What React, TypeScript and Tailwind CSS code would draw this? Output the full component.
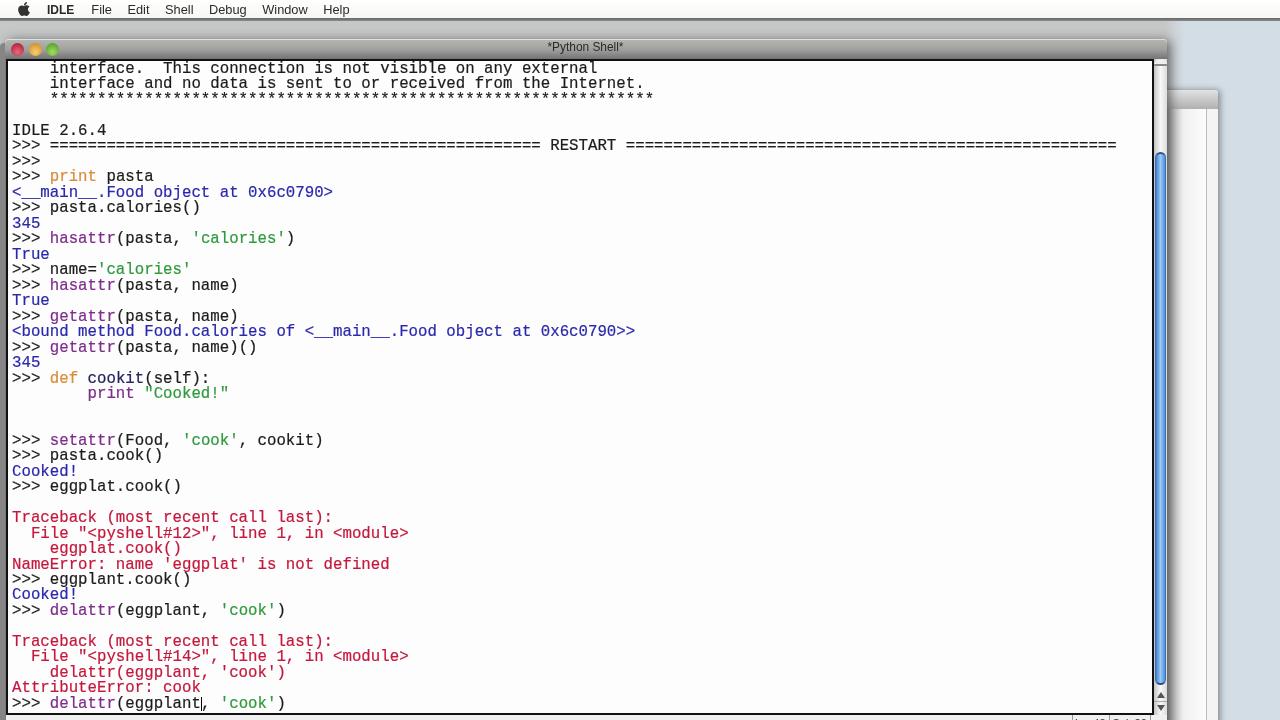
import { FaApple } from 'react-icons/fa'

type Seg = [string, string]

const K = 'text-[#d98c3a]' // keyword
const S = 'text-[#2f9a3c]' // string
const B = 'text-[#7f2c8c]' // builtin
const D = 'text-[#23235e]' // definition
const O = 'text-[#2a28ad]' // stdout
const E = 'text-[#c4183c]' // stderr
const T = 'text-[#1c1c1c]' // plain

const bar = '='.repeat(52)

const lines: Seg[][] = [
  [[T, '    interface.  This connection is not visible on any external']],
  [[T, '    interface and no data is sent to or received from the Internet.']],
  [[T, '    ' + '*'.repeat(64)]],
  [],
  [[T, 'IDLE 2.6.4']],
  [[T, '>>> ' + bar + ' RESTART ' + bar]],
  [[T, '>>> ']],
  [[T, '>>> '], [K, 'print'], [T, ' pasta']],
  [[O, '<__main__.Food object at 0x6c0790>']],
  [[T, '>>> pasta.calories()']],
  [[O, '345']],
  [[T, '>>> '], [B, 'hasattr'], [T, '(pasta, '], [S, "'calories'"], [T, ')']],
  [[O, 'True']],
  [[T, '>>> name='], [S, "'calories'"]],
  [[T, '>>> '], [B, 'hasattr'], [T, '(pasta, name)']],
  [[O, 'True']],
  [[T, '>>> '], [B, 'getattr'], [T, '(pasta, name)']],
  [[O, '<bound method Food.calories of <__main__.Food object at 0x6c0790>>']],
  [[T, '>>> '], [B, 'getattr'], [T, '(pasta, name)()']],
  [[O, '345']],
  [[T, '>>> '], [K, 'def'], [T, ' '], [D, 'cookit'], [T, '(self):']],
  [[T, '        '], [B, 'print'], [T, ' '], [S, '"Cooked!"']],
  [],
  [],
  [[T, '>>> '], [B, 'setattr'], [T, '(Food, '], [S, "'cook'"], [T, ', cookit)']],
  [[T, '>>> pasta.cook()']],
  [[O, 'Cooked!']],
  [[T, '>>> eggplat.cook()']],
  [],
  [[E, 'Traceback (most recent call last):']],
  [[E, '  File "<pyshell#12>", line 1, in <module>']],
  [[E, '    eggplat.cook()']],
  [[E, "NameError: name 'eggplat' is not defined"]],
  [[T, '>>> eggplant.cook()']],
  [[O, 'Cooked!']],
  [[T, '>>> '], [B, 'delattr'], [T, '(eggplant, '], [S, "'cook'"], [T, ')']],
  [],
  [[E, 'Traceback (most recent call last):']],
  [[E, '  File "<pyshell#14>", line 1, in <module>']],
  [[E, "    delattr(eggplant, 'cook')"]],
  [[E, 'AttributeError: cook']],
]

const menus = ['File', 'Edit', 'Shell', 'Debug', 'Window', 'Help']

function MenuBar() {
  return (
    <div className="h-[18px] shrink-0 bg-gradient-to-b from-[#ffffff] to-[#f6f7f2] flex items-center pl-[16px] pt-[1px] text-[12.8px] text-[#2a2a2a] font-['Liberation_Sans',sans-serif]">
      <FaApple className="w-[16px] h-[16px] text-[#333] -mt-[2px]" />
      <span className="font-bold ml-[15px] text-[12px]">IDLE</span>
      <div className="flex gap-[15.5px] ml-[17px]">
        {menus.map(m => <span key={m}>{m}</span>)}
      </div>
    </div>
  )
}

function Scrollbar() {
  return (
    <div className="w-[13px] shrink-0 flex flex-col bg-gradient-to-r from-[#c4c4c4] via-[#f8f8f8] to-[#dcdcdc]">
      <div className="h-[7px] rounded-t-full border-b-2 border-[#888] bg-[#eee]" />
      <div className="h-[86px]" />
      <div className="flex-1 mx-[1px] rounded-full border-x border-[#3b6fb4] border-t-2 border-b-2 border-t-[#27508f] border-b-[#27508f] bg-gradient-to-r from-[#3f7fd0] via-[#9cc8f4] to-[#4f8fdc]" />
      <div className="h-[14px] mt-[3px] flex items-center justify-center border-b border-[#aaa] text-[#555]">
        <svg width="8" height="6" viewBox="0 0 8 6"><path d="M4 0L8 6H0z" fill="currentColor" /></svg>
      </div>
      <div className="h-[13px] pb-[1px] flex items-center justify-center text-[#555]">
        <svg width="8" height="6" viewBox="0 0 8 6"><path d="M0 0h8L4 6z" fill="currentColor" /></svg>
      </div>
    </div>
  )
}

export default function App() {
  return (
    <div className="w-[1280px] h-[720px] overflow-hidden flex flex-col bg-[#d3dde5] blur-[0.4px]">
      <MenuBar />
      <div className="h-[3px] shrink-0 bg-gradient-to-b from-[#666] to-[#8a8a8a]" />
      <div className="relative flex-1 bg-gradient-to-r from-[#c6c7c7] from-[91%] to-[#d3dde5] to-[92.5%]">
        {/* window behind */}
        <div className="absolute left-[1160px] top-[69px] w-[58px] h-[700px] rounded-t-[3px] flex flex-col shadow-[2px_0_6px_rgba(0,0,0,0.4)]">
          <div className="h-[19px] shrink-0 bg-gradient-to-b from-[#e2e2e2] to-[#b0b0b0] rounded-t-[3px]" />
          <div className="flex-1 flex bg-white">
            <div className="flex-1 bg-gradient-to-r from-[#8c8c8c] via-[#f0f0f0] to-[#fcfcfc]" />
            <div className="w-[12px] shrink-0 border-l border-[#bbb] bg-[#f4f4f4]" />
          </div>
        </div>
        {/* shell window */}
        <div className="absolute left-[5px] top-[18px] w-[1162px] h-[700px] flex flex-col rounded-t-[4px] shadow-[-5px_4px_0_#858585,3px_2px_12px_rgba(0,0,0,0.55)]">
          <div className="relative h-[20px] shrink-0 rounded-t-[4px] border-t border-[#e0e0e0] bg-gradient-to-b from-[#b4b4b0] via-[#a0a09e] to-[#747474] flex items-center pl-[6px] pb-[1px] gap-[4.5px]">
            <span className="w-[13px] h-[13px] rounded-full bg-[radial-gradient(circle_at_50%_70%,#e86a80,#a01028)]" />
            <span className="w-[13px] h-[13px] rounded-full bg-[radial-gradient(circle_at_50%_70%,#f8d070,#c88020)]" />
            <span className="w-[13px] h-[13px] rounded-full bg-[radial-gradient(circle_at_50%_70%,#a0e060,#489020)]" />
            <span className="absolute left-0 right-0 -mt-[3px] -ml-[1px] text-center text-[11.9px] text-[#2a2a2a] font-['Liberation_Sans',sans-serif]">*Python Shell*</span>
          </div>
          <div className="flex-1 flex flex-col bg-[#7a7a7a] pl-[1px]">
            <div className="flex h-[656px] shrink-0">
              <div className="w-[1148px] shrink-0 border-2 border-[#111] bg-[#fdfdfd] overflow-hidden pl-[4px] font-['Liberation_Mono',monospace] text-[15.74px] leading-[15.49px] whitespace-pre pt-[1px] [-webkit-text-stroke:0.2px]">
                {lines.map((line, i) => (
                  <div key={i} className="h-[15.49px]">
                    {line.map(([c, t], j) => <span key={j} className={c}>{t}</span>)}
                  </div>
                ))}
                <div className="h-[15.49px] relative">
                  <span className={T}>{'>>> '}</span>
                  <span className={B}>delattr</span>
                  <span className={T}>(eggplant</span>
                  <span className="inline-block w-[1px] h-[14px] bg-black align-middle" />
                  <span className={`${T} -ml-[1px]`}>, </span>
                  <span className={S}>'cook'</span>
                  <span className={T}>)</span>
                </div>
              </div>
              <Scrollbar />
            </div>
            <div className="flex-1 bg-[#f0f0f0] flex justify-end text-[11px] text-[#333] font-['Liberation_Sans',sans-serif]">
              <span className="border-l border-[#999] px-[2px] w-[37px]">Ln: 43</span>
              <span className="border-l border-r border-[#999] px-[2px] w-[42px]">Col: 20</span>
              <span className="w-[16px]" />
            </div>
          </div>
        </div>
      </div>
    </div>
  )
}
